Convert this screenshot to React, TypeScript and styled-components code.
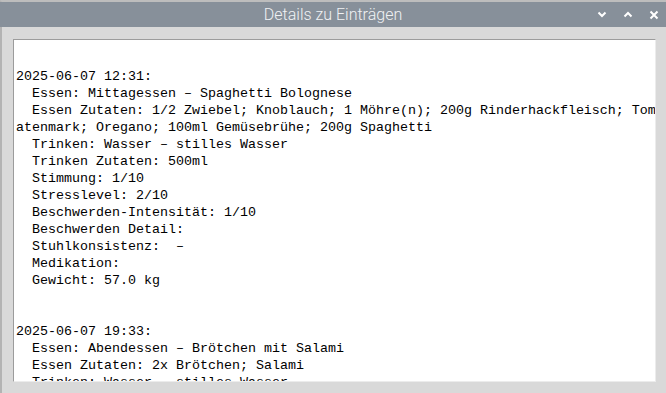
import React from 'react';
import styled, { createGlobalStyle } from 'styled-components';

const GlobalStyle = createGlobalStyle`
  html, body {
    margin: 0;
    padding: 0;
    height: 100%;
    overflow: hidden;
    background: #d9d9d9;
  }
  #root {
    height: 100%;
  }
`;

const Window = styled.div`
  display: flex;
  flex-direction: column;
  height: 100vh;
  border-top: 2px solid #bdbdbd;
  border-left: 2px solid #b3b3b3;
  box-sizing: border-box;
  background: #d9d9d9;
`;

const TitleBar = styled.div`
  display: grid;
  grid-template-columns: 1fr auto 1fr;
  align-items: center;
  height: 25px;
  flex: none;
  background: #87909a;
  margin-left: -2px;
`;

const Title = styled.div`
  grid-column: 2;
  font-family: Roboto, 'Liberation Sans', sans-serif;
  font-size: 16px;
  font-weight: 300;
  color: #f0f2f4;
  white-space: nowrap;
`;

const Controls = styled.div`
  grid-column: 3;
  justify-self: end;
  display: flex;
  gap: 2px;
  height: 100%;
`;

const ControlButton = styled.div`
  display: flex;
  align-items: center;
  justify-content: center;
  width: 24px;
  height: 100%;
`;

const Body = styled.div`
  flex: 1;
  min-height: 0;
  display: flex;
  padding: 12px 8px 11px 11px;
`;

const TextBox = styled.div`
  flex: none;
  width: 643px;
  box-sizing: border-box;
  height: 100%;
  overflow: hidden;
  background: #ffffff;
  border-top: 1px solid #9c9c9c;
  border-left: 1px solid #9c9c9c;
  border-right: 1px solid #ececec;
  border-bottom: 1px solid #ececec;
  padding: 11px 0 0 2px;
`;

const Pre = styled.pre`
  margin: 0;
  width: 641px;
  font-family: 'Liberation Mono', monospace;
  font-size: 13.33px;
  line-height: 17px;
  color: #000;
  white-space: pre-wrap;
  word-break: break-all;
`;

const Chevron = ({ up }: { up?: boolean }) => (
  <svg width="10" height="7" viewBox="0 0 10 7">
    <path
      d={up ? 'M1.5 5.5 L5 2 L8.5 5.5' : 'M1.5 1.5 L5 5 L8.5 1.5'}
      fill="none"
      stroke="#ffffff"
      strokeWidth="2"
    />
  </svg>
);

const Cross = () => (
  <svg width="10" height="10" viewBox="0 0 10 10">
    <path d="M1.5 1.5 L8.5 8.5 M8.5 1.5 L1.5 8.5" stroke="#ffffff" strokeWidth="2" />
  </svg>
);

type Entry = {
  time: string;
  fields: [string, string][];
};

const entries: Entry[] = [
  {
    time: '2025-06-07 12:31',
    fields: [
      ['Essen', 'Mittagessen – Spaghetti Bolognese'],
      [
        'Essen Zutaten',
        '1/2 Zwiebel; Knoblauch; 1 Möhre(n); 200g Rinderhackfleisch; Tomatenmark; Oregano; 100ml Gemüsebrühe; 200g Spaghetti'
      ],
      ['Trinken', 'Wasser – stilles Wasser'],
      ['Trinken Zutaten', '500ml'],
      ['Stimmung', '1/10'],
      ['Stresslevel', '2/10'],
      ['Beschwerden-Intensität', '1/10'],
      ['Beschwerden Detail', ''],
      ['Stuhlkonsistenz', ' –'],
      ['Medikation', ''],
      ['Gewicht', '57.0 kg']
    ]
  },
  {
    time: '2025-06-07 19:33',
    fields: [
      ['Essen', 'Abendessen – Brötchen mit Salami'],
      ['Essen Zutaten', '2x Brötchen; Salami'],
      ['Trinken', 'Wasser – stilles Wasser'],
      ['Trinken Zutaten', '300ml'],
      ['Stimmung', '1/10'],
      ['Stresslevel', '2/10']
    ]
  }
];

function formatEntries(list: Entry[]) {
  return (
    '\n' +
    list
      .map(e => `${e.time}:\n` + e.fields.map(([k, v]) => `  ${k}: ${v}`).join('\n'))
      .join('\n\n\n')
  );
}

export default function App() {
  return (
    <>
      <GlobalStyle />
      <Window>
        <TitleBar>
          <Title>Details zu Einträgen</Title>
          <Controls>
            <ControlButton>
              <Chevron />
            </ControlButton>
            <ControlButton>
              <Chevron up />
            </ControlButton>
            <ControlButton>
              <Cross />
            </ControlButton>
          </Controls>
        </TitleBar>
        <Body>
          <TextBox>
            <Pre>{formatEntries(entries)}</Pre>
          </TextBox>
        </Body>
      </Window>
    </>
  );
}
